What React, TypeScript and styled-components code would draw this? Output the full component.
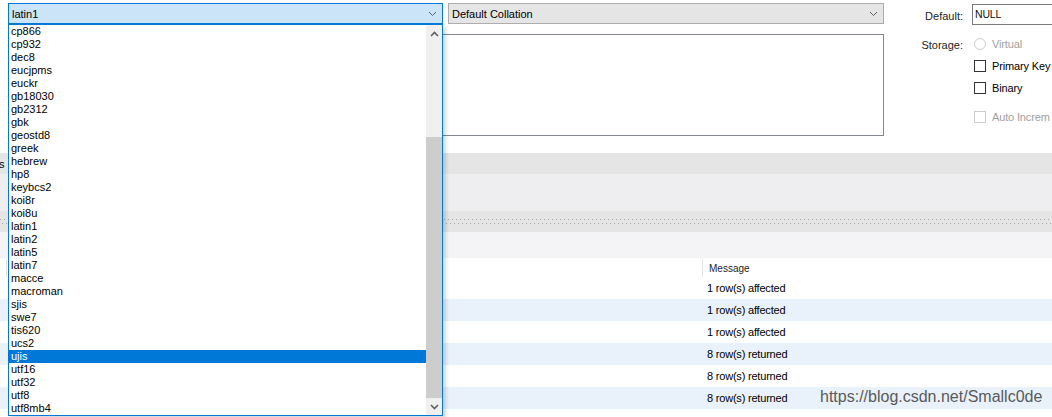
import styled, { createGlobalStyle } from "styled-components";

const GlobalStyle = createGlobalStyle`
  html, body {
    margin: 0;
    padding: 0;
    background: #ffffff;
  }
  body {
    font-family: "Liberation Sans", Arial, sans-serif;
    font-size: 11px;
    color: #000000;
  }
`;

const charsets = [
  "cp866", "cp932", "dec8", "eucjpms", "euckr", "gb18030", "gb2312", "gbk",
  "geostd8", "greek", "hebrew", "hp8", "keybcs2", "koi8r", "koi8u", "latin1",
  "latin2", "latin5", "latin7", "macce", "macroman", "sjis", "swe7", "tis620",
  "ucs2", "ujis", "utf16", "utf32", "utf8", "utf8mb4",
];

const messages = [
  "1 row(s) affected",
  "1 row(s) affected",
  "1 row(s) affected",
  "8 row(s) returned",
  "8 row(s) returned",
  "8 row(s) returned",
];

const Screen = styled.div`
  position: relative;
  width: 1052px;
  height: 417px;
  overflow: hidden;
  background: #ffffff;
  display: flex;
  flex-direction: column;
`;

// column editor (top part)
const EditorPanel = styled.div`
  height: 153px;
  flex-shrink: 0;
  display: flex;
`;

const EditorGrid = styled.div`
  display: grid;
  grid-template-columns: 435px 436px;
  grid-template-rows: 21px 102px;
  column-gap: 5px;
  row-gap: 10px;
  margin: 3px 0 0 8px;
`;

const Combo = styled.div<{ $focused?: boolean }>`
  box-sizing: border-box;
  height: 21px;
  display: flex;
  align-items: center;
  justify-content: space-between;
  padding: 0 5px 0 3px;
  border: 1px solid ${(p) => (p.$focused ? "#0078d7" : "#adadad")};
  background: ${(p) => (p.$focused ? "#cce4f7" : "#e5e5e5")};
  color: #000;
`;

const CommentBox = styled.div`
  grid-column: 1 / 3;
  box-sizing: border-box;
  border: 1px solid #828790;
  background: #ffffff;
`;

const RightForm = styled.div`
  width: 168px;
  flex-shrink: 0;
  display: flex;
  flex-direction: column;
  overflow: hidden;
`;

const FormRow = styled.div<{ $top: number; $h: number }>`
  display: grid;
  grid-template-columns: 79px 1fr;
  column-gap: 9px;
  align-items: center;
  margin-top: ${(p) => p.$top}px;
  height: ${(p) => p.$h}px;
`;

const FieldLabel = styled.span`
  text-align: right;
  color: #1e1e1e;
  padding-top: 2px;
`;

const TextInput = styled.div`
  box-sizing: border-box;
  width: 90px;
  height: 21px;
  border: 1px solid #7a7a7a;
  padding: 3px 0 0 2px;
  font-size: 10.5px;
  color: #111;
  letter-spacing: -0.2px;
`;

const Option = styled.div<{ $disabled?: boolean }>`
  display: flex;
  align-items: center;
  gap: 6px;
  margin-left: 2px;
  white-space: nowrap;
  letter-spacing: -0.15px;
  color: ${(p) => (p.$disabled ? "#a0a0a0" : "#000")};
`;

const Radio = styled.span`
  box-sizing: border-box;
  flex-shrink: 0;
  width: 12px;
  height: 12px;
  border-radius: 50%;
  border: 1px solid #cccccc;
  background: #fff;
`;

const CheckBox = styled.span<{ $disabled?: boolean }>`
  box-sizing: border-box;
  flex-shrink: 0;
  width: 12px;
  height: 12px;
  border: 1px solid ${(p) => (p.$disabled ? "#cccccc" : "#333333")};
  background: #fff;
`;

// bands between editor and output
const Band = styled.div<{ $h: number; $bg: string }>`
  height: ${(p) => p.$h}px;
  flex-shrink: 0;
  background: ${(p) => p.$bg};
  display: flex;
  align-items: center;
`;

const CutText = styled.span`
  margin-left: -1px;
  color: #000;
`;

const Splitter = styled.div`
  height: 21px;
  flex-shrink: 0;
  background: #e5e5e5;
  display: flex;
  flex-direction: column;
  justify-content: center;
  gap: 3px;
`;

const DotRow = styled.div<{ $shift: number }>`
  height: 1px;
  background: repeating-linear-gradient(
    90deg,
    #a6a6a6 0 1px,
    transparent 1px 4px
  );
  background-position: ${(p) => p.$shift}px 0;
`;

// output table
const Output = styled.div`
  flex: 1;
  background: #fff;
  display: flex;
  flex-direction: column;
`;

const HeaderRow = styled.div`
  height: 18px;
  flex-shrink: 0;
  display: grid;
  grid-template-columns: 5px 698px 1fr;
  align-items: stretch;
  margin-top: 1px;
`;

const HeaderCell = styled.div<{ $divider?: boolean }>`
  display: flex;
  align-items: center;
  padding-left: 6px;
  font-size: 10px;
  color: #1e1e1e;
  border-right: ${(p) => (p.$divider ? "1px solid #e3e3e3" : "none")};
  box-sizing: border-box;
`;

const DataRow = styled.div<{ $alt: boolean }>`
  height: 22px;
  flex-shrink: 0;
  display: grid;
  grid-template-columns: 703px 1fr;
  align-items: center;
  background: ${(p) => (p.$alt ? "#e9f1fb" : "#ffffff")};
`;

const MessageCell = styled.div`
  grid-column: 2;
  padding-left: 4px;
  letter-spacing: -0.2px;
  color: #000;
`;

// open charset popup
const Popup = styled.div`
  position: absolute;
  left: 8px;
  top: 24px;
  width: 435px;
  height: 392px;
  box-sizing: border-box;
  border: 1px solid #0078d7;
  background: #fff;
  display: flex;
  box-shadow: 3px 3px 4px rgba(0, 0, 0, 0.16);
`;

const ItemList = styled.div`
  width: 417px;
  display: flex;
  flex-direction: column;
`;

const Item = styled.div<{ $selected?: boolean }>`
  height: 13px;
  line-height: 13px;
  padding-left: 2px;
  background: ${(p) => (p.$selected ? "#0078d7" : "transparent")};
  color: ${(p) => (p.$selected ? "#ffffff" : "#000000")};
  white-space: nowrap;
`;

const ScrollBar = styled.div`
  width: 16px;
  background: #f0f0f0;
  display: flex;
  flex-direction: column;
`;

const ArrowButton = styled.div`
  height: 17px;
  flex-shrink: 0;
  display: flex;
  align-items: center;
  justify-content: center;
`;

const Track = styled.div`
  flex: 1;
  display: flex;
  flex-direction: column;
`;

const Thumb = styled.div<{ $offset: number }>`
  margin-top: ${(p) => p.$offset}px;
  flex: 1;
  background: #cdcdcd;
`;

const Watermark = styled.div`
  position: absolute;
  left: 820px;
  top: 388px;
  font-size: 16px;
  line-height: 18px;
  color: #5a5a5a;
  white-space: nowrap;
`;

function Chevron({ up, bold }: { up?: boolean; bold?: boolean }) {
  return (
    <svg width="9" height="6" viewBox="0 0 9 6">
      <polyline
        points={up ? "1,5 4.5,1.5 8,5" : "1,1 4.5,4.5 8,1"}
        fill="none"
        stroke="#606060"
        strokeWidth={bold ? 1.6 : 1}
      />
    </svg>
  );
}

export default function App() {
  return (
    <>
      <GlobalStyle />
      <Screen>
        <EditorPanel>
          <EditorGrid>
            <Combo $focused>
              <span>latin1</span>
              <Chevron />
            </Combo>
            <Combo>
              <span>Default Collation</span>
              <Chevron />
            </Combo>
            <CommentBox />
          </EditorGrid>
          <RightForm>
            <FormRow $top={4} $h={21}>
              <FieldLabel>Default:</FieldLabel>
              <TextInput>NULL</TextInput>
            </FormRow>
            <FormRow $top={8} $h={22}>
              <FieldLabel>Storage:</FieldLabel>
              <Option $disabled>
                <Radio />
                Virtual
              </Option>
            </FormRow>
            <FormRow $top={0} $h={22}>
              <span />
              <Option>
                <CheckBox />
                Primary Key
              </Option>
            </FormRow>
            <FormRow $top={0} $h={22}>
              <span />
              <Option>
                <CheckBox />
                Binary
              </Option>
            </FormRow>
            <FormRow $top={7} $h={22}>
              <span />
              <Option $disabled>
                <CheckBox $disabled />
                Auto Increm
              </Option>
            </FormRow>
          </RightForm>
        </EditorPanel>

        <Band $h={21} $bg="#e5e5e5">
          <CutText>s</CutText>
        </Band>
        <Band $h={37} $bg="#eeeef0" />
        <Splitter>
          <DotRow $shift={0} />
          <DotRow $shift={2} />
        </Splitter>
        <Band $h={26} $bg="#f4f4f6" />

        <Output>
          <HeaderRow>
            <HeaderCell $divider />
            <HeaderCell $divider />
            <HeaderCell>Message</HeaderCell>
          </HeaderRow>
          {messages.map((m, i) => (
            <DataRow key={i} $alt={i % 2 === 1}>
              <MessageCell>{m}</MessageCell>
            </DataRow>
          ))}
        </Output>

        <Popup>
          <ItemList>
            {charsets.map((c) => (
              <Item key={c} $selected={c === "ujis"}>
                {c}
              </Item>
            ))}
          </ItemList>
          <ScrollBar>
            <ArrowButton>
              <Chevron up bold />
            </ArrowButton>
            <Track>
              <Thumb $offset={95} />
            </Track>
            <ArrowButton>
              <Chevron bold />
            </ArrowButton>
          </ScrollBar>
        </Popup>

        <Watermark>https://blog.csdn.net/Smallc0de</Watermark>
      </Screen>
    </>
  );
}
